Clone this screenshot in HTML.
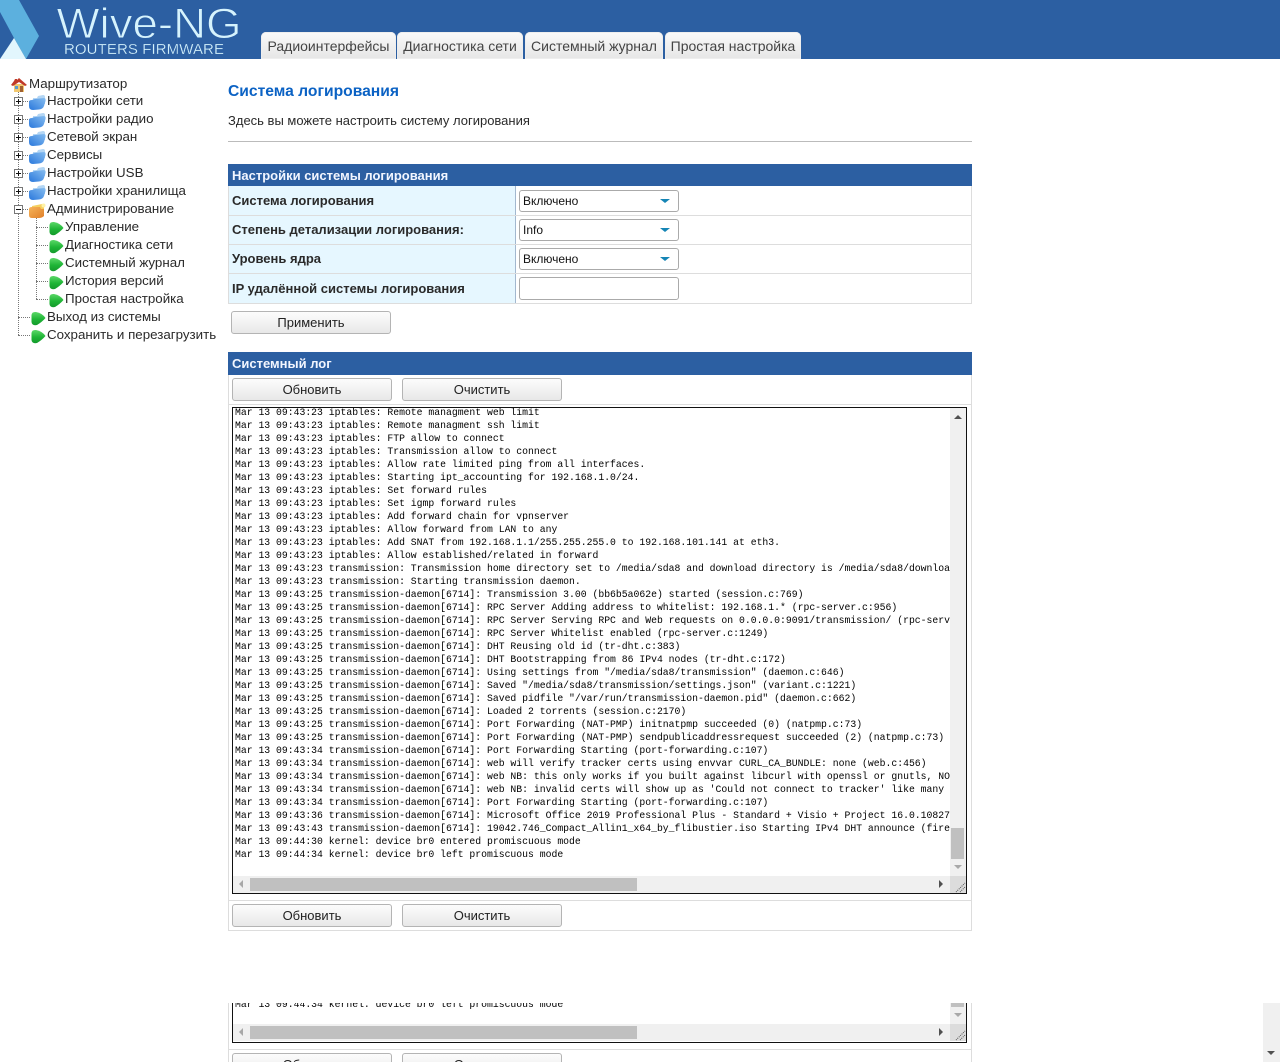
<!DOCTYPE html>
<html lang="ru"><head><meta charset="utf-8"><title>Wive-NG</title>
<style>
html,body{margin:0;padding:0;background:#fff;width:1280px;height:1062px;overflow:hidden}
body{position:relative;font-family:"Liberation Sans",Arial,sans-serif;color:#333}
.a{position:absolute;white-space:nowrap}
.hd{position:absolute;background:#2c5fa2}
.tab{position:absolute;top:32px;height:27px;box-sizing:border-box;border-radius:5px 5px 0 0;background:linear-gradient(#fafafa,#e6e6e6);font-size:14px;line-height:28px;text-align:center;color:#444;box-shadow:inset 0 0 0 1px #eee}
.t{position:absolute;white-space:nowrap;font-size:13.33px;line-height:18px;height:18px;color:#2a2a2a}
.dv{position:absolute;width:0;border-left:1px dotted #777}
.dh{position:absolute;height:0;border-top:1px dotted #777}
.box{position:absolute;left:14px;width:7px;height:7px;border:1px solid #777;background:#fff}
.box:before{content:"";position:absolute;left:1px;top:3px;width:5px;height:1px;background:#111}
.plus:after{content:"";position:absolute;left:3px;top:1px;width:1px;height:5px;background:#111}
svg.i{position:absolute}
.lbl{position:absolute;left:232px;font-size:13px;font-weight:bold;color:#2a2a2a;line-height:16px;white-space:nowrap}
.sel,.inp{position:absolute;left:519px;width:160px;box-sizing:border-box;height:22px;border:1px solid #aaa;border-radius:3px;background:#fff;font-size:12px;line-height:20px;padding-left:3px;color:#111}
.sel:after{content:"";position:absolute;right:8px;top:8px;border-style:solid;border-color:#1585b5 transparent transparent;border-width:4px 5px 0}
.btn{position:absolute;width:160px;height:23px;box-sizing:border-box;border:1px solid #b4b4b4;border-radius:3px;background:linear-gradient(#fcfcfc,#e8e8e8);font-size:13px;line-height:22px;text-align:center;color:#222}
.ln{position:absolute;background:#ddd}
.ta{position:absolute;left:232px;width:735px;height:487px;box-sizing:border-box;border:1px solid #111;overflow:hidden;background:#fff}
pre{position:absolute;left:2px;top:-2px;margin:0;font-family:"Liberation Mono",monospace;font-size:9.78px;line-height:13px;color:#000;width:715px;overflow:hidden;height:460px}
.vs{position:absolute;left:717px;top:0;width:16px;height:468px;background:#f0f0f0}
.hs{position:absolute;left:0;top:468px;width:717px;height:17px;background:#f0f0f0}
.cn{position:absolute;left:717px;top:468px;width:16px;height:17px;background:#dcdcdc}
</style></head><body>
<svg width="0" height="0" style="position:absolute"><defs>
<linearGradient id="gb" x1="0" y1="1" x2="1" y2="0"><stop offset="0" stop-color="#2a78dc"/><stop offset="1" stop-color="#86bdf0"/></linearGradient>
<linearGradient id="gy" x1="0" y1="0" x2="1" y2="1"><stop offset="0" stop-color="#f6b45a"/><stop offset="1" stop-color="#e0802a"/></linearGradient>
<linearGradient id="gg" x1="0" y1="0" x2="0" y2="1"><stop offset="0" stop-color="#5cd868"/><stop offset=".55" stop-color="#1fb536"/><stop offset="1" stop-color="#149a2c"/></linearGradient>
<symbol id="fo" viewBox="0 0 17 15"><path d="M4 3 L8 3 L9 1 L14 0 Q16 0 16 2 L16 9 L4 9Z" fill="#b4d6f4"/><path d="M0 7 Q0 5 3 5 L6 4 L15 3 Q17 3 16.5 6 L15 11 Q14 14 10 14.5 L4 15 Q0 15 0 11Z" fill="url(#gb)"/></symbol>
<symbol id="fy" viewBox="0 0 17 15"><path d="M3 3 L13 1 L15 2 L15 12 L3 14Z" fill="#f6d060"/><path d="M0 6 Q0 4 3 4 L11 4 L12 6 L15 6 L15 13 Q13 15 10 15 L3 15 Q0 15 0 12Z" fill="url(#gy)"/><circle cx="14.5" cy="2.5" r="2" fill="#fff2a8"/></symbol>
<symbol id="le" viewBox="0 0 15 15"><path d="M0.5 4 Q1 0.5 5 1 Q11 2 14.5 7 Q11 11 6 14 Q1 15 0.5 11Z" fill="url(#gg)"/></symbol>
</defs></svg>

<!-- header -->
<div class="hd" style="left:0;top:0;width:1280px;height:59px"></div>
<svg class="i" style="left:0;top:0" width="50" height="59"><path d="M0 0 L19 0 L39 36 L26 59 L14 38 L0 12Z" fill="#5cb0de"/><path d="M14 38 L26 59 L0 59Z" fill="#e2f6fd"/></svg>
<svg class="i" style="left:50px;top:0" width="205" height="59">
<text x="6.5" y="38" font-family="Liberation Sans,sans-serif" font-size="43" fill="#d6f3fd" stroke="#2c5fa2" stroke-width=".9" textLength="185" lengthAdjust="spacingAndGlyphs">Wive-NG</text>
<text x="14" y="54" font-family="Liberation Sans,sans-serif" font-size="15" fill="#d6f3fd" stroke="#2c5fa2" stroke-width=".25" textLength="160" lengthAdjust="spacing">ROUTERS FIRMWARE</text></svg>
<div class="tab" style="left:261px;width:135px">Радиоинтерфейсы</div>
<div class="tab" style="left:397px;width:126px">Диагностика сети</div>
<div class="tab" style="left:525px;width:138px">Системный журнал</div>
<div class="tab" style="left:665px;width:136px">Простая настройка</div>

<!-- tree -->
<div class="dv" style="left:18px;top:92px;height:243px"></div>
<div class="dv" style="left:36px;top:216px;height:83px"></div>
<div class="dh" style="left:18px;top:317px;width:12px"></div>
<div class="dh" style="left:18px;top:335px;width:12px"></div>
<div class="dh" style="left:36px;top:227px;width:12px"></div>
<div class="dh" style="left:36px;top:245px;width:12px"></div>
<div class="dh" style="left:36px;top:263px;width:12px"></div>
<div class="dh" style="left:36px;top:281px;width:12px"></div>
<div class="dh" style="left:36px;top:299px;width:12px"></div>
<div class="dh" style="left:22px;top:101px;width:8px"></div>
<div class="dh" style="left:22px;top:119px;width:8px"></div>
<div class="dh" style="left:22px;top:137px;width:8px"></div>
<div class="dh" style="left:22px;top:155px;width:8px"></div>
<div class="dh" style="left:22px;top:173px;width:8px"></div>
<div class="dh" style="left:22px;top:191px;width:8px"></div>
<div class="dh" style="left:22px;top:209px;width:8px"></div>

<svg class="i" style="left:11px;top:78px" width="16" height="14" viewBox="0 0 16 14"><path d="M3 6 L13 6 L13 14 L3 14Z" fill="#f2c870"/><path d="M0 7 L3 3 L4 1 L6 1 L6 2 L8 0 L16 7 L14 8 L8 4 L2 8Z" fill="#c03a28"/><rect x="4" y="8" width="3" height="3" fill="#5a9ad0"/><rect x="9" y="8" width="3" height="6" fill="#a06030"/></svg>
<span class="t" style="left:29px;top:75px">Маршрутизатор</span>

<div class="box plus" style="top:97px"></div><svg class="i" style="left:29px;top:95px" width="17" height="15"><use href="#fo"/></svg><span class="t" style="left:47px;top:92px">Настройки сети</span>
<div class="box plus" style="top:115px"></div><svg class="i" style="left:29px;top:113px" width="17" height="15"><use href="#fo"/></svg><span class="t" style="left:47px;top:110px">Настройки радио</span>
<div class="box plus" style="top:133px"></div><svg class="i" style="left:29px;top:131px" width="17" height="15"><use href="#fo"/></svg><span class="t" style="left:47px;top:128px">Сетевой экран</span>
<div class="box plus" style="top:151px"></div><svg class="i" style="left:29px;top:149px" width="17" height="15"><use href="#fo"/></svg><span class="t" style="left:47px;top:146px">Сервисы</span>
<div class="box plus" style="top:169px"></div><svg class="i" style="left:29px;top:167px" width="17" height="15"><use href="#fo"/></svg><span class="t" style="left:47px;top:164px">Настройки USB</span>
<div class="box plus" style="top:187px"></div><svg class="i" style="left:29px;top:185px" width="17" height="15"><use href="#fo"/></svg><span class="t" style="left:47px;top:182px">Настройки хранилища</span>
<div class="box" style="top:205px"></div><svg class="i" style="left:29px;top:203px" width="17" height="15"><use href="#fy"/></svg><span class="t" style="left:47px;top:200px">Администрирование</span>

<svg class="i" style="left:49px;top:221px" width="15" height="15"><use href="#le"/></svg><span class="t" style="left:65px;top:218px">Управление</span>
<svg class="i" style="left:49px;top:239px" width="15" height="15"><use href="#le"/></svg><span class="t" style="left:65px;top:236px">Диагностика сети</span>
<svg class="i" style="left:49px;top:257px" width="15" height="15"><use href="#le"/></svg><span class="t" style="left:65px;top:254px">Системный журнал</span>
<svg class="i" style="left:49px;top:275px" width="15" height="15"><use href="#le"/></svg><span class="t" style="left:65px;top:272px">История версий</span>
<svg class="i" style="left:49px;top:293px" width="15" height="15"><use href="#le"/></svg><span class="t" style="left:65px;top:290px">Простая настройка</span>
<svg class="i" style="left:31px;top:311px" width="15" height="15"><use href="#le"/></svg><span class="t" style="left:47px;top:308px">Выход из системы</span>
<svg class="i" style="left:31px;top:329px" width="15" height="15"><use href="#le"/></svg><span class="t" style="left:47px;top:326px">Сохранить и перезагрузить</span>

<!-- content -->
<div class="a" style="left:228px;top:82px;font-size:15.65px;font-weight:bold;line-height:19px;color:#0b62c4">Система логирования</div>
<div class="a" style="left:228px;top:113px;font-size:13px;line-height:16px;color:#2a2a2a">Здесь вы можете настроить систему логирования</div>
<div class="ln" style="left:228px;top:141px;width:744px;height:1px;background:#bbb"></div>

<div class="hd" style="left:228px;top:164px;width:744px;height:22px"></div>
<div class="a" style="left:232px;top:168px;font-size:13px;font-weight:bold;line-height:16px;color:#f2f6ff">Настройки системы логирования</div>
<div class="a" style="left:228px;top:186px;width:288px;height:117px;background:#e6f7ff"></div>
<div class="ln" style="left:515px;top:186px;width:1px;height:117px;background:#a3b8cf"></div>
<div class="ln" style="left:228px;top:186px;width:1px;height:118px"></div>
<div class="ln" style="left:971px;top:186px;width:1px;height:118px"></div>
<div class="ln" style="left:228px;top:215px;width:744px;height:1px"></div>
<div class="ln" style="left:228px;top:244px;width:744px;height:1px"></div>
<div class="ln" style="left:228px;top:273px;width:744px;height:1px"></div>
<div class="ln" style="left:228px;top:303px;width:744px;height:1px"></div>
<div class="lbl" style="top:193px">Система логирования</div>
<div class="lbl" style="top:222px">Степень детализации логирования:</div>
<div class="lbl" style="top:251px">Уровень ядра</div>
<div class="lbl" style="top:281px">IP удалённой системы логирования</div>
<div class="sel" style="top:190px">Включено</div>
<div class="sel" style="top:219px">Info</div>
<div class="sel" style="top:248px">Включено</div>
<div class="inp" style="top:277px;height:23px"></div>
<div class="btn" style="left:231px;top:311px">Применить</div>

<div class="hd" style="left:228px;top:352px;width:744px;height:23px"></div>
<div class="a" style="left:232px;top:356px;font-size:13px;font-weight:bold;line-height:16px;color:#f2f6ff">Системный лог</div>
<div class="ln" style="left:228px;top:375px;width:1px;height:556px"></div>
<div class="ln" style="left:971px;top:375px;width:1px;height:556px"></div>
<div class="ln" style="left:228px;top:404px;width:744px;height:1px"></div>
<div class="ln" style="left:228px;top:900px;width:744px;height:1px"></div>
<div class="ln" style="left:228px;top:930px;width:744px;height:1px"></div>
<div class="btn" style="left:232px;top:378px">Обновить</div>
<div class="btn" style="left:402px;top:378px">Очистить</div>
<div class="btn" style="left:232px;top:904px">Обновить</div>
<div class="btn" style="left:402px;top:904px">Очистить</div>

<div class="ta" style="top:407px">
<pre>Mar 13 09:43:23 iptables: Remote managment web limit
Mar 13 09:43:23 iptables: Remote managment ssh limit
Mar 13 09:43:23 iptables: FTP allow to connect
Mar 13 09:43:23 iptables: Transmission allow to connect
Mar 13 09:43:23 iptables: Allow rate limited ping from all interfaces.
Mar 13 09:43:23 iptables: Starting ipt_accounting for 192.168.1.0/24.
Mar 13 09:43:23 iptables: Set forward rules
Mar 13 09:43:23 iptables: Set igmp forward rules
Mar 13 09:43:23 iptables: Add forward chain for vpnserver
Mar 13 09:43:23 iptables: Allow forward from LAN to any
Mar 13 09:43:23 iptables: Add SNAT from 192.168.1.1/255.255.255.0 to 192.168.101.141 at eth3.
Mar 13 09:43:23 iptables: Allow established/related in forward
Mar 13 09:43:23 transmission: Transmission home directory set to /media/sda8 and download directory is /media/sda8/downloads
Mar 13 09:43:23 transmission: Starting transmission daemon.
Mar 13 09:43:25 transmission-daemon[6714]: Transmission 3.00 (bb6b5a062e) started (session.c:769)
Mar 13 09:43:25 transmission-daemon[6714]: RPC Server Adding address to whitelist: 192.168.1.* (rpc-server.c:956)
Mar 13 09:43:25 transmission-daemon[6714]: RPC Server Serving RPC and Web requests on 0.0.0.0:9091/transmission/ (rpc-server.c:1233)
Mar 13 09:43:25 transmission-daemon[6714]: RPC Server Whitelist enabled (rpc-server.c:1249)
Mar 13 09:43:25 transmission-daemon[6714]: DHT Reusing old id (tr-dht.c:383)
Mar 13 09:43:25 transmission-daemon[6714]: DHT Bootstrapping from 86 IPv4 nodes (tr-dht.c:172)
Mar 13 09:43:25 transmission-daemon[6714]: Using settings from "/media/sda8/transmission" (daemon.c:646)
Mar 13 09:43:25 transmission-daemon[6714]: Saved "/media/sda8/transmission/settings.json" (variant.c:1221)
Mar 13 09:43:25 transmission-daemon[6714]: Saved pidfile "/var/run/transmission-daemon.pid" (daemon.c:662)
Mar 13 09:43:25 transmission-daemon[6714]: Loaded 2 torrents (session.c:2170)
Mar 13 09:43:25 transmission-daemon[6714]: Port Forwarding (NAT-PMP) initnatpmp succeeded (0) (natpmp.c:73)
Mar 13 09:43:25 transmission-daemon[6714]: Port Forwarding (NAT-PMP) sendpublicaddressrequest succeeded (2) (natpmp.c:73)
Mar 13 09:43:34 transmission-daemon[6714]: Port Forwarding Starting (port-forwarding.c:107)
Mar 13 09:43:34 transmission-daemon[6714]: web will verify tracker certs using envvar CURL_CA_BUNDLE: none (web.c:456)
Mar 13 09:43:34 transmission-daemon[6714]: web NB: this only works if you built against libcurl with openssl or gnutls, NOT nss
Mar 13 09:43:34 transmission-daemon[6714]: web NB: invalid certs will show up as 'Could not connect to tracker' like many
Mar 13 09:43:34 transmission-daemon[6714]: Port Forwarding Starting (port-forwarding.c:107)
Mar 13 09:43:36 transmission-daemon[6714]: Microsoft Office 2019 Professional Plus - Standard + Visio + Project 16.0.10827
Mar 13 09:43:43 transmission-daemon[6714]: 19042.746_Compact_Allin1_x64_by_flibustier.iso Starting IPv4 DHT announce (firewall)
Mar 13 09:44:30 kernel: device br0 entered promiscuous mode
Mar 13 09:44:34 kernel: device br0 left promiscuous mode</pre>
<div class="vs">
<div style="position:absolute;left:1px;top:420px;width:13px;height:31px;background:#c0c0c0"></div>
<div style="position:absolute;left:4px;top:7px;border:4px solid transparent;border-top:0;border-bottom:4px solid #505050"></div>
<div style="position:absolute;left:4px;top:457px;border:4px solid transparent;border-bottom:0;border-top:4px solid #a8a8a8"></div>
</div>
<div class="hs">
<div style="position:absolute;left:17px;top:2px;width:387px;height:13px;background:#c0c0c0"></div>
<div style="position:absolute;left:6px;top:4px;border:4px solid transparent;border-left:0;border-right:4px solid #a8a8a8"></div>
<div style="position:absolute;left:706px;top:4px;border:4px solid transparent;border-right:0;border-left:4px solid #505050"></div>
</div>
<div class="cn"><svg width="16" height="17" style="position:absolute;left:0;top:0"><path d="M6 16 L15 7 M10 16 L15 11" stroke="#555" stroke-width="1" stroke-dasharray="1 1"/></svg></div>
</div>

<!-- repeated fragment at bottom -->
<div class="a" style="left:0;top:1003px;width:1280px;height:59px;overflow:hidden;background:#fff">
<div class="ln" style="left:228px;top:0;width:1px;height:59px"></div>
<div class="ln" style="left:971px;top:0;width:1px;height:59px"></div>
<div class="ln" style="left:228px;top:46px;width:744px;height:1px"></div>
<div class="ta" style="top:-447px;border-top:0">
<div style="position:absolute;left:2px;top:442px;font-family:'Liberation Mono',monospace;font-size:9.78px;line-height:13px;color:#000;white-space:pre">Mar 13 09:44:34 kernel: device br0 left promiscuous mode</div>
<div class="vs">
<div style="position:absolute;left:1px;top:420px;width:13px;height:31px;background:#c0c0c0"></div>
<div style="position:absolute;left:4px;top:457px;border:4px solid transparent;border-bottom:0;border-top:4px solid #a8a8a8"></div>
</div>
<div class="hs">
<div style="position:absolute;left:17px;top:2px;width:387px;height:13px;background:#c0c0c0"></div>
<div style="position:absolute;left:6px;top:4px;border:4px solid transparent;border-left:0;border-right:4px solid #a8a8a8"></div>
<div style="position:absolute;left:706px;top:4px;border:4px solid transparent;border-right:0;border-left:4px solid #505050"></div>
</div>
<div class="cn"><svg width="16" height="17" style="position:absolute;left:0;top:0"><path d="M6 16 L15 7 M10 16 L15 11" stroke="#555" stroke-width="1" stroke-dasharray="1 1"/></svg></div>
</div>
<div class="btn" style="left:232px;top:50px">Обновить</div>
<div class="btn" style="left:402px;top:50px">Очистить</div>
<div style="position:absolute;left:1263px;top:0;width:17px;height:59px;background:#f0f0f0"></div>
<div style="position:absolute;left:1267px;top:48px;border:4px solid transparent;border-bottom:0;border-top:4px solid #505050"></div>
</div>
</body></html>
